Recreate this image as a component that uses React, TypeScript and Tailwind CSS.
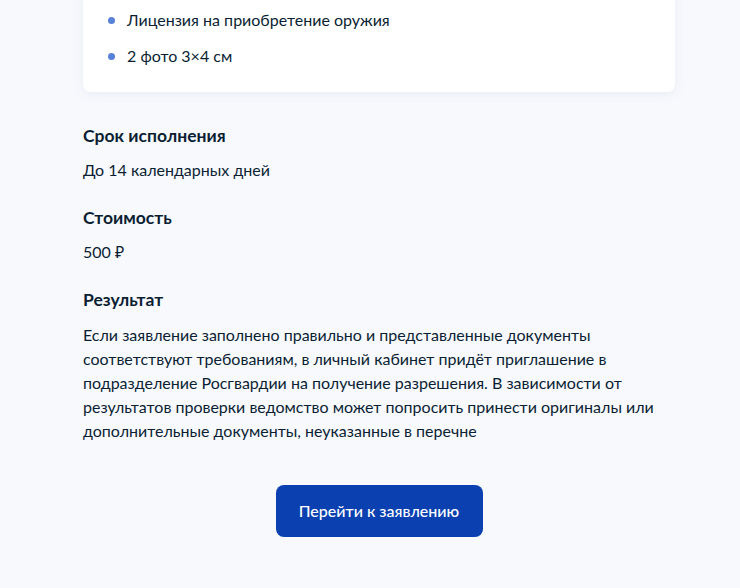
import React from "react";

export default function App() {
  return (
    <div
      className="min-h-[588px] w-full overflow-hidden bg-[#f8f9fd] text-[#0b1f33]"
      style={{ fontFamily: "Lato, 'Noto Sans', sans-serif" }}
    >
      <div className="ml-[83px] flex w-[592px] flex-col">
        <div className="-mt-[16px] rounded-[8px] bg-white px-[24px] pb-[24px] pt-[24px] shadow-[0_2px_12px_rgba(140,160,200,0.14)]">
          <ul className="flex flex-col gap-[12px] text-[16px] leading-[24px]">
            <li className="flex items-center gap-[12px] pl-[1px]">
              <span className="h-[7px] w-[7px] shrink-0 rounded-full bg-[#5882d8]" />
              <span>Лицензия на приобретение оружия</span>
            </li>
            <li className="flex items-center gap-[12px] pl-[1px]">
              <span className="h-[7px] w-[7px] shrink-0 rounded-full bg-[#5882d8]" />
              <span>2 фото 3×4 см</span>
            </li>
          </ul>
        </div>

        <h3 className="mt-[32px] text-[17.5px] font-bold leading-[24px]">Срок исполнения</h3>
        <p className="mt-[10px] text-[16px] leading-[24px]">До 14 календарных дней</p>

        <h3 className="mt-[24px] text-[17.5px] font-bold leading-[24px]">Стоимость</h3>
        <p className="mt-[10px] text-[16px] leading-[24px]">500 ₽</p>

        <h3 className="mt-[24px] text-[17.5px] font-bold leading-[24px]">Результат</h3>
        <p className="mt-[11px] text-[16px] leading-[24px]">
          Если заявление заполнено правильно и представленные документы соответствуют требованиям, в личный кабинет придёт приглашение в подразделение Росгвардии на получение разрешения. В зависимости от результатов проверки ведомство может попросить принести оригиналы или дополнительные документы, неуказанные в перечне
        </p>

        <div className="mt-[42px] flex justify-center">
          <button className="h-[52px] w-[207px] rounded-[8px] bg-[#0b40b1] text-[16px] font-medium text-white">
            Перейти к заявлению
          </button>
        </div>
      </div>
    </div>
  );
}
